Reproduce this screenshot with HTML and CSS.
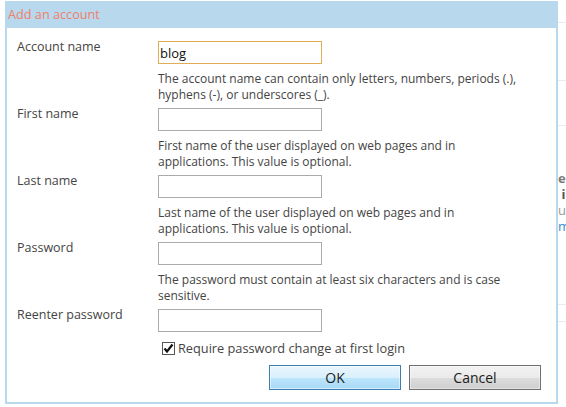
FILE: index.html
```html
<!DOCTYPE html>
<html>
<head>
<meta charset="utf-8">
<link rel="stylesheet" href="styles.css">
</head>
<body>
<div class="page">
  <div class="bg-main"></div>
  <div class="bg-side">
    <div class="bg-rule r1"></div>
    <div class="bg-rule r2"></div>
    <div class="bg-rule r3"></div>
    <div class="bg-text bold">el</div>
    <div class="bg-text bold dark">&nbsp;i</div>
    <div class="bg-text light">ule</div>
    <div class="bg-text link">m</div>
    <div class="bg-rule r4"></div>
    <div class="bg-rule r5"></div>
  </div>

  <div class="dialog">
    <div class="titlebar">Add an account</div>
    <div class="dialog-body">
      <div class="form">
        <div class="label">Account name</div>
        <div class="field">
          <input class="textbox focused" type="text" value="blog">
          <p class="help">The account name can contain only letters, numbers, periods (.),<br>hyphens (-), or underscores (_).</p>
        </div>

        <div class="label">First name</div>
        <div class="field">
          <input class="textbox" type="text">
          <p class="help">First name of the user displayed on web pages and in<br>applications. This value is optional.</p>
        </div>

        <div class="label">Last name</div>
        <div class="field">
          <input class="textbox" type="text">
          <p class="help">Last name of the user displayed on web pages and in<br>applications. This value is optional.</p>
        </div>

        <div class="label">Password</div>
        <div class="field">
          <input class="textbox" type="password">
          <p class="help">The password must contain at least six characters and is case<br>sensitive.</p>
        </div>

        <div class="label">Reenter password</div>
        <div class="field">
          <input class="textbox" type="password">
        </div>

        <div class="check-row">
          <span class="checkbox"><svg width="11" height="11" viewBox="0 0 11 11"><path d="M1.5 5.5 L4 8.5 L9.5 1.5" fill="none" stroke="#111" stroke-width="2.2" stroke-linejoin="miter" stroke-linecap="butt"/></svg></span>
          <span class="check-label">Require password change at first login</span>
        </div>
      </div>

      <div class="buttons">
        <button class="btn btn-primary">OK</button>
        <button class="btn btn-default">Cancel</button>
      </div>
    </div>
  </div>
</div>
</body>
</html>
```
FILE: styles.css
```css
html, body {
  margin: 0;
  padding: 0;
  background: #ffffff;
}

.page {
  position: relative;
  width: 566px;
  height: 407px;
  overflow: hidden;
  display: flex;
  font-family: "Open Sans", "Noto Sans", sans-serif;
}

.bg-main {
  width: 556px;
  flex: none;
}

.bg-side {
  flex: 1;
  min-width: 0;
  overflow: hidden;
  padding-top: 22px;
  display: flex;
  flex-direction: column;
}

.bg-rule {
  height: 1px;
  background: #e8ecef;
}
.bg-rule.r2 { margin-top: 57px; }
.bg-rule.r3 { margin-top: 44px; margin-bottom: 44px; }
.bg-rule.r4 { margin-top: 70px; }
.bg-rule.r5 { margin-top: 16px; }

.bg-text {
  font-size: 13px;
  line-height: 16px;
  height: 16px;
  padding-left: 2px;
  white-space: nowrap;
  overflow: hidden;
}
.bg-text.bold { font-weight: 700; color: #7a7a7a; }
.bg-text.bold.dark { color: #555; }
.bg-text.light { color: #9a9a9a; }
.bg-text.link { color: #3a8bd0; }

.dialog {
  position: absolute;
  left: 5px;
  top: 1px;
  width: 553px;
  height: 403px;
  box-sizing: border-box;
  border: 2px solid #b8d8ed;
  background: #ffffff;
  display: flex;
  flex-direction: column;
}

.titlebar {
  height: 25px;
  background: #b8d8ed;
  color: #ef8068;
  font-size: 12.7px;
  line-height: 22px;
  padding-left: 1px;
  white-space: nowrap;
}

.dialog-body {
  flex: 1;
  padding: 13px 15px 12px 10px;
  display: flex;
  flex-direction: column;
  color: #444444;
  font-size: 12px;
}

.form {
  display: grid;
  grid-template-columns: 141px 1fr;
  row-gap: 5px;
}

.label {
  font-size: 12.5px;
  line-height: 16px;
  margin-top: -2px;
  white-space: nowrap;
}

.field {
  display: flex;
  flex-direction: column;
  align-items: flex-start;
}

.textbox {
  -webkit-appearance: none;
  appearance: none;
  box-sizing: border-box;
  width: 164px;
  height: 23px;
  margin: 0;
  border: 1px solid #ababab;
  border-radius: 0;
  padding: 0 1px;
  font-family: "Open Sans", "Noto Sans", sans-serif;
  font-size: 13px;
  color: #111;
  background: #fff;
  outline: none;
}

.textbox.focused {
  border-color: #e1ad57;
}

.help {
  margin: 7px 0 0 0;
  line-height: 16px;
  white-space: nowrap;
}

.check-row {
  grid-column: 2;
  margin-top: 3px;
  display: flex;
  align-items: center;
  height: 16px;
  padding-left: 4px;
}

.checkbox {
  width: 13px;
  height: 13px;
  box-sizing: border-box;
  border: 1px solid #555;
  background: #fff;
  display: flex;
  align-items: center;
  justify-content: center;
  margin-right: 3px;
}

.checkbox svg {
  display: block;
}

.check-label {
  font-size: 12.75px;
  line-height: 16px;
  white-space: nowrap;
}

.buttons {
  margin-top: 9px;
  display: flex;
  justify-content: flex-end;
  gap: 8px;
}

.btn {
  width: 132px;
  height: 25px;
  box-sizing: border-box;
  margin: 0;
  padding: 0;
  font-family: "Open Sans", "Noto Sans", sans-serif;
  font-size: 14px;
  color: #1a1a1a;
  border-radius: 0;
  cursor: default;
}

.btn-primary {
  border: 1px solid #3c7fb1;
  background: linear-gradient(to bottom, #eaf6fd 0%, #d9f0fc 50%, #bee6fd 50%, #a7d9f5 100%);
  box-shadow: inset 0 0 0 1px rgba(255,255,255,0.5);
}

.btn-default {
  border: 1px solid #707070;
  background: linear-gradient(to bottom, #f2f2f2 0%, #ebebeb 50%, #dddddd 50%, #cfcfcf 100%);
  box-shadow: inset 0 0 0 1px rgba(255,255,255,0.4);
}
```
